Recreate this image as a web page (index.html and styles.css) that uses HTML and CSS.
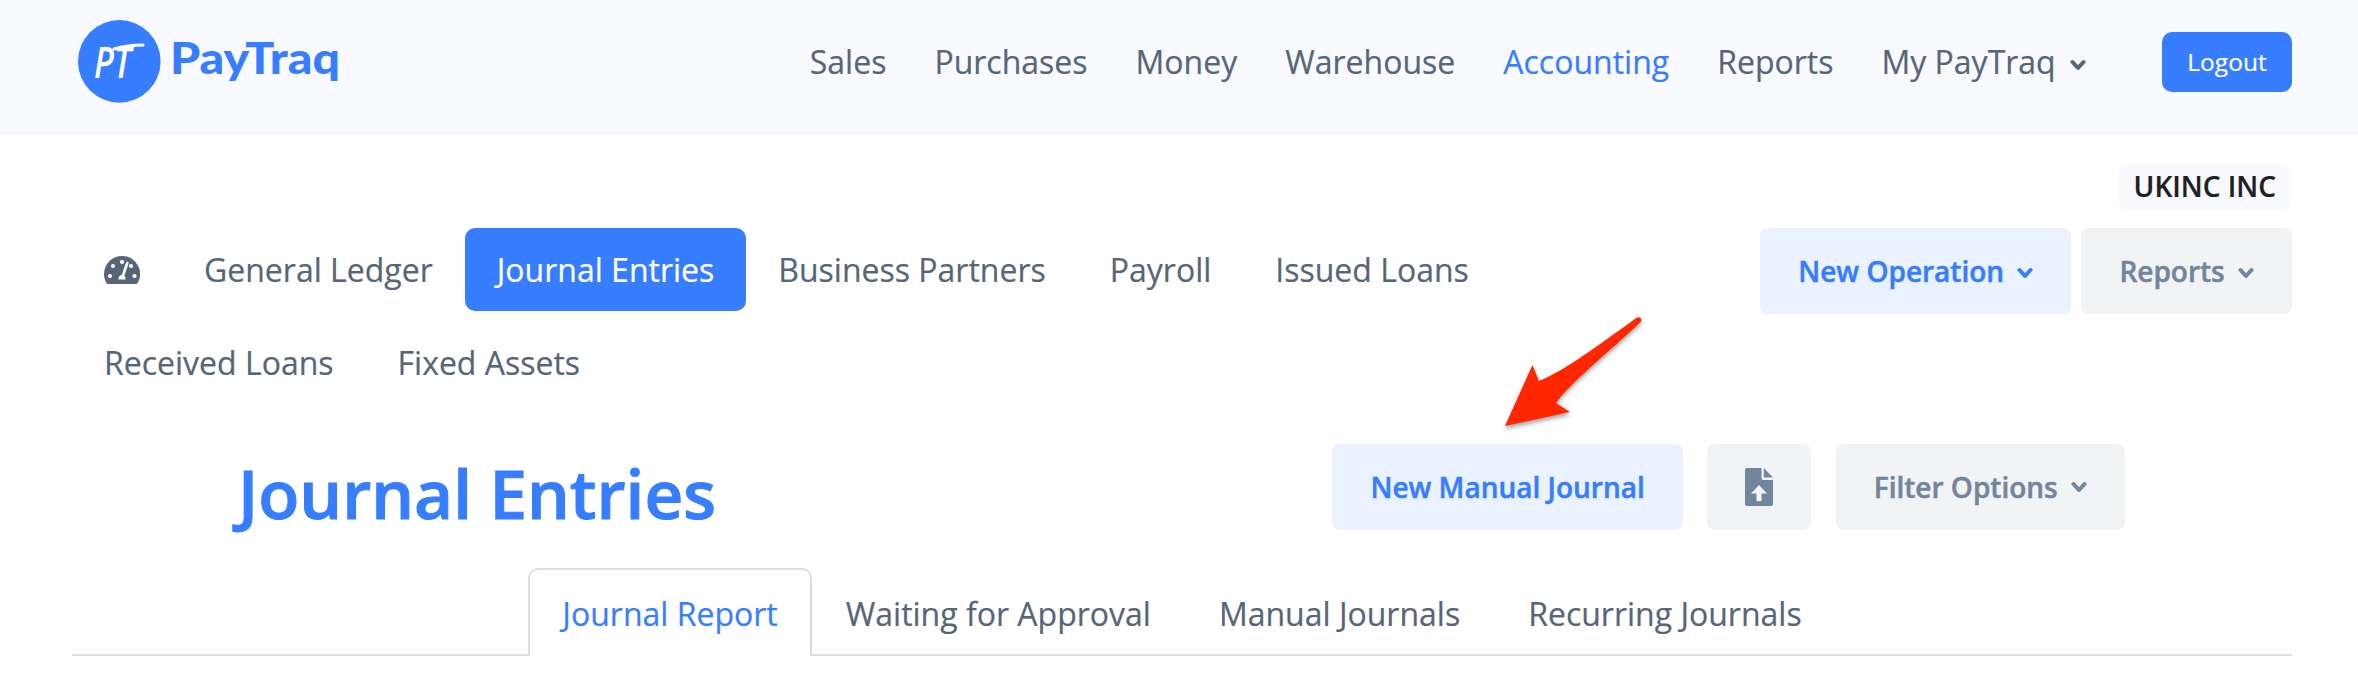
FILE: index.html
```
<!DOCTYPE html>
<html lang="en">
<head>
  <meta charset="UTF-8" />
  <meta name="viewport" content="width=device-width, initial-scale=1.0" />
  <title>Journal Entries</title>
  <link rel="stylesheet" href="styles.css">
</head>
<body>
  <svg class="sprite">
    <symbol id="chevron" viewBox="0 0 16 12">
      <path d="M2.5 3l5.5 6 5.5-6" fill="none" stroke="currentColor" stroke-width="4" stroke-linecap="round" stroke-linejoin="round" />
    </symbol>
  </svg>

  <header class="header">
    <a class="logo">
      <svg width="270" height="84" viewBox="0 0 270 84">
        <circle cx="41.3" cy="41.4" r="41.3" fill="#377dff" />
        <text class="logo-mark" transform="translate(16 58)" textLength="37" lengthAdjust="spacingAndGlyphs">PT</text>
        <path d="M36 29q14-4 29-4" fill="none" stroke="#fff" stroke-width="3.2" stroke-linecap="round" />
        <text class="logo-name" x="92" y="53.5" textLength="170" lengthAdjust="spacingAndGlyphs">PayTraq</text>
      </svg>
    </a>
    <nav class="main-nav">
      <a>Sales</a>
      <a>Purchases</a>
      <a>Money</a>
      <a>Warehouse</a>
      <a class="active">Accounting</a>
      <a>Reports</a>
      <a>My PayTraq <svg class="chevron"><use href="#chevron" /></svg></a>
    </nav>
    <a class="logout">Logout</a>
  </header>

  <main class="container">
    <div class="company"><span class="company-name">UKINC INC</span></div>

    <div class="toolbar">
      <nav class="pills">
        <a class="pill">
          <svg class="gauge" viewBox="0 0 36 28">
            <path d="M18 0A18 18 0 0 0 0 18c0 3.300.9 6.400 2.400 9.100.3.600.9.900 1.600.9h28c.7 0 1.300-.3 1.600-.9A18 18 0 0 0 18 0z" fill="currentColor" />
            <g fill="#fff">
              <circle cx="18" cy="6" r="2.100" />
              <circle cx="9" cy="10" r="2.100" />
              <circle cx="27" cy="10" r="2.100" />
              <circle cx="6" cy="20" r="2.100" />
              <circle cx="30.500" cy="20" r="2.100" />
              <path d="M14.500 23.500a3.600 3.600 0 1 1 7 0z" />
            </g>
            <path d="M18.500 21l4.800-14" stroke="#fff" stroke-width="2.600" stroke-linecap="round" />
          </svg>
        </a>
        <a class="pill">General Ledger</a>
        <a class="pill active">Journal Entries</a>
        <a class="pill">Business Partners</a>
        <a class="pill">Payroll</a>
        <a class="pill">Issued Loans</a>
        <a class="pill">Received Loans</a>
        <a class="pill">Fixed Assets</a>
      </nav>
      <div class="toolbar-actions">
        <a class="btn btn-primary">New Operation <svg class="chevron"><use href="#chevron" /></svg></a>
        <a class="btn btn-secondary">Reports <svg class="chevron"><use href="#chevron" /></svg></a>
      </div>
    </div>

    <div class="title-row">
      <h1>Journal Entries</h1>
      <div class="title-actions">
        <a class="btn btn-primary">New Manual Journal</a>
        <a class="btn btn-secondary btn-icon">
          <svg class="file-upload" viewBox="0 0 28 38">
            <path d="M16.500 0H2C.8 0 0 .8 0 2v34c0 1.200.8 2 2 2h24c1.200 0 2-.8 2-2V12H18.500c-1.200 0-2-.8-2-2zM18.800 0v9.500H28z" fill="currentColor" />
            <path d="M14 17l-8 8.500h5.500V32c0 .8.500 1.300 1.300 1.300h2.400c.8 0 1.300-.5 1.300-1.300v-6.500H22z" fill="#f1f3f5" />
          </svg>
        </a>
        <a class="btn btn-secondary btn-filter">Filter Options <svg class="chevron"><use href="#chevron" /></svg></a>
      </div>
    </div>

    <nav class="tabs">
      <a class="tab active">Journal Report</a>
      <a class="tab">Waiting for Approval</a>
      <a class="tab">Manual Journals</a>
      <a class="tab">Recurring Journals</a>
    </nav>
  </main>

  <svg class="arrow" width="150" height="124" viewBox="0 0 150 124">
    <path d="M5 111L32.500 50l6.500 16C66 55 100 29 137 2.500q5-1 4 4C108 38 70 68 56 88l14 9z" fill="#ff2600" />
  </svg>
</body>
</html>
```
FILE: styles.css
```
:root {
  --primary: #377dff;
  --primary-soft: #ebf2ff;
  --secondary: #71869d;
  --secondary-soft: #f1f3f5;
  --text: #566678;
  --border: #dedede;
}

* {
  box-sizing: border-box;
}

body {
  margin: 0;
  font-family: "Open Sans", sans-serif;
  font-size: 32px;
  line-height: 48px;
  color: var(--text);
  background: #fff;
  -webkit-text-stroke: 0.2px;
}

.sprite {
  display: none;
}

.chevron {
  width: 16px;
  height: 12px;
  margin: 0 0 3px 6px;
}

.header {
  display: flex;
  align-items: flex-start;
  height: 135px;
  padding: 20px 66px 0 78px;
  background: #f9faff;
}

.logo svg {
  display: block;
}

.logo-mark {
  font: italic 600 43px "Open Sans", sans-serif;
  fill: #fff;
}

.logo-name {
  font: 900 44px Lato, sans-serif;
  fill: var(--primary);
}

.main-nav {
  display: flex;
  gap: 48px;
  margin-left: auto;
  padding-top: 18px;
}

.main-nav .active {
  color: var(--primary);
}

.logout {
  width: 130px;
  height: 60px;
  margin: 12px 0 0 76px;
  border-radius: 10px;
  background: var(--primary);
  color: #fff;
  font-size: 24.5px;
  line-height: 59px;
  text-align: center;
}

.container {
  padding: 29px 66px 0 72px;
}

.company {
  display: flex;
  justify-content: flex-end;
}

.company-name {
  height: 46px;
  padding: 0 16px;
  border-radius: 10px;
  background: #f9faff;
  color: #1e2022;
  font-size: 28px;
  font-weight: 600;
  line-height: 45px;
}

.toolbar {
  display: flex;
  justify-content: space-between;
  align-items: flex-start;
  margin-top: 18px;
}

.pills {
  display: flex;
  flex-wrap: wrap;
  row-gap: 10px;
  width: 1560px;
}

.pill {
  height: 83px;
  padding: 0 32px;
  border-radius: 10px;
  line-height: 83px;
}

.pill.active {
  background: var(--primary);
  color: #fff;
}

.gauge {
  width: 36px;
  height: 28px;
  vertical-align: -2px;
}

.toolbar-actions {
  display: flex;
  gap: 10px;
}

.btn {
  height: 86px;
  padding: 0 38px;
  border-radius: 8px;
  font-size: 28px;
  font-weight: 600;
  line-height: 86px;
  -webkit-text-stroke: 0.5px;
}

.btn-primary {
  background: var(--primary-soft);
  color: var(--primary);
}

.btn-secondary {
  background: var(--secondary-soft);
  color: var(--secondary);
}

.btn-icon {
  display: flex;
  align-items: center;
  justify-content: center;
  width: 104px;
  padding: 0;
}

.file-upload {
  width: 28px;
  height: 38px;
}

.btn-filter {
  margin-left: 1px;
}

.btn-filter .chevron {
  margin-bottom: 5px;
}

.title-row {
  display: flex;
  justify-content: space-between;
  align-items: flex-start;
  margin-top: 40px;
  padding: 0 167px 0 166px;
}

h1 {
  margin: 0;
  color: var(--primary);
  font-size: 67.4px;
  font-weight: 600;
  line-height: 98px;
  -webkit-text-stroke: 1px;
}

.title-actions {
  display: flex;
  gap: 24px;
}

.tabs {
  display: flex;
  justify-content: center;
  margin-top: 26px;
  border-bottom: 2px solid var(--border);
}

.tab {
  height: 88px;
  margin-bottom: -2px;
  padding: 0 32px;
  border: 2px solid transparent;
  border-bottom: none;
  border-radius: 10px 10px 0 0;
  line-height: 87px;
}

.tab.active {
  border-color: var(--border);
  background: #fff;
  color: var(--primary);
}

/* callout pointing at the new journal button */
.arrow {
  position: absolute;
  top: 315px;
  left: 1500px;
  filter: drop-shadow(0 3px 2px rgba(0, 0, 0, 0.35));
}
```
